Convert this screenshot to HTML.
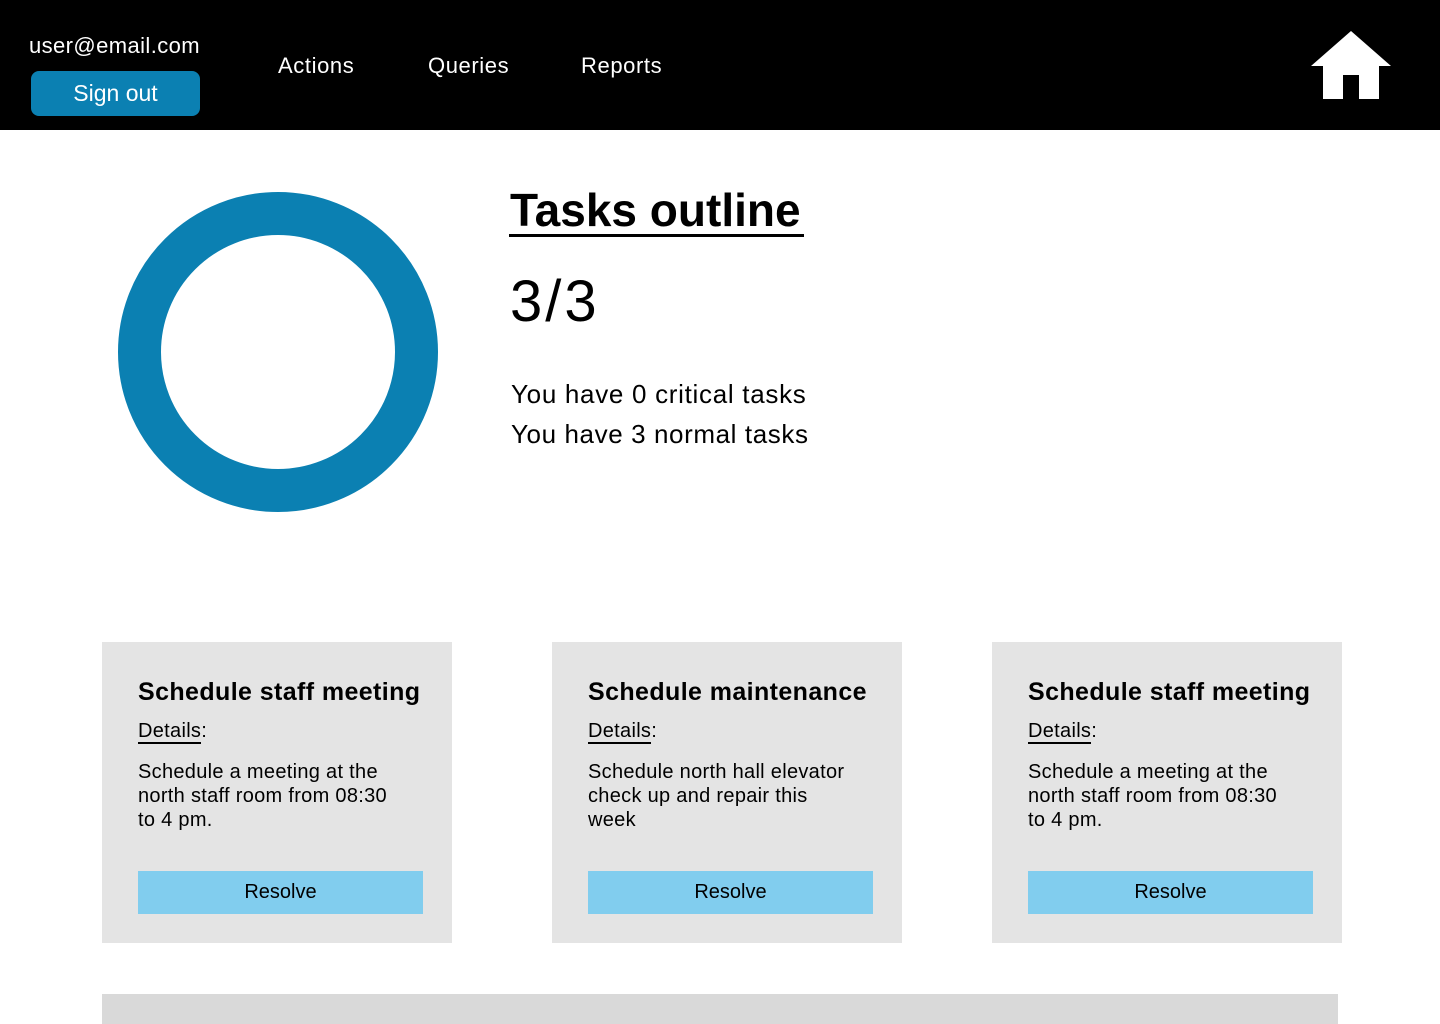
<!DOCTYPE html>
<html><head><style>
*{margin:0;padding:0;box-sizing:border-box}
body{width:1440px;height:1024px;overflow:hidden;background:#fff;font-family:"Liberation Sans",sans-serif;position:relative;color:#000}
.a{position:absolute;white-space:nowrap}
.nav{position:absolute;left:0;top:0;width:1440px;height:130px;background:#000}
.card{position:absolute;top:642px;width:350px;height:301px;background:#e4e4e4}
.card h3{position:absolute;left:36px;top:36px;font-size:25px;font-weight:bold;white-space:nowrap;letter-spacing:0.4px}
.card .d{position:absolute;left:36px;top:78px;font-size:20px;letter-spacing:0.3px}
.card .d u{text-decoration:none;border-bottom:2px solid #000}
.card p{position:absolute;left:36px;top:118px;font-size:20px;line-height:24px;white-space:nowrap;letter-spacing:0.3px}
.card .b{position:absolute;left:36px;top:229px;width:285px;height:43px;background:#81cdee;font-size:20px;text-align:center;line-height:43px}
.n{color:#fff;font-size:22px;letter-spacing:0.6px}
</style></head><body>
<div class="nav"></div>
<div class="a n" style="left:29px;top:33px;letter-spacing:0.4px">user@email.com</div>
<div class="a" style="left:31px;top:71px;width:169px;height:45px;background:#0b80b2;border-radius:8px;color:#fff;font-size:23px;text-align:center;line-height:45px">Sign out</div>
<div class="a n" style="left:278px;top:53px">Actions</div>
<div class="a n" style="left:428px;top:53px">Queries</div>
<div class="a n" style="left:581px;top:53px">Reports</div>
<svg class="a" style="left:0;top:0" width="1440" height="130"><path d="M1351 31 L1391 66 L1379 66 L1379 99 L1359 99 L1359 75 L1343 75 L1343 99 L1323 99 L1323 66 L1311 66 Z" fill="#fff"/></svg>
<svg class="a" style="left:0;top:130px" width="500" height="420"><circle cx="278" cy="222" r="138.5" fill="none" stroke="#0b80b2" stroke-width="43"/></svg>
<div class="a" style="left:510px;top:183px;font-size:46px;font-weight:bold">Tasks outline</div>
<div class="a" style="left:509px;top:234px;width:295px;height:3px;background:#000"></div>
<div class="a" style="left:510px;top:268px;font-size:58px;letter-spacing:3px">3/3</div>
<div class="a" style="left:511px;top:379px;font-size:26px;letter-spacing:0.7px">You have 0 critical tasks</div>
<div class="a" style="left:511px;top:419px;font-size:26px;letter-spacing:0.6px">You have 3 normal tasks</div>
<div class="card" style="left:102px"><h3>Schedule staff meeting</h3><div class="d"><u>Details</u>:</div><p>Schedule a meeting at the<br>north staff room from 08:30<br>to 4 pm.</p><div class="b">Resolve</div></div>
<div class="card" style="left:552px"><h3>Schedule maintenance</h3><div class="d"><u>Details</u>:</div><p>Schedule north hall elevator<br>check up and repair this<br>week</p><div class="b">Resolve</div></div>
<div class="card" style="left:992px"><h3>Schedule staff meeting</h3><div class="d"><u>Details</u>:</div><p>Schedule a meeting at the<br>north staff room from 08:30<br>to 4 pm.</p><div class="b">Resolve</div></div>
<div class="a" style="left:102px;top:994px;width:1236px;height:30px;background:#d9d9d9"></div>
</body></html>
